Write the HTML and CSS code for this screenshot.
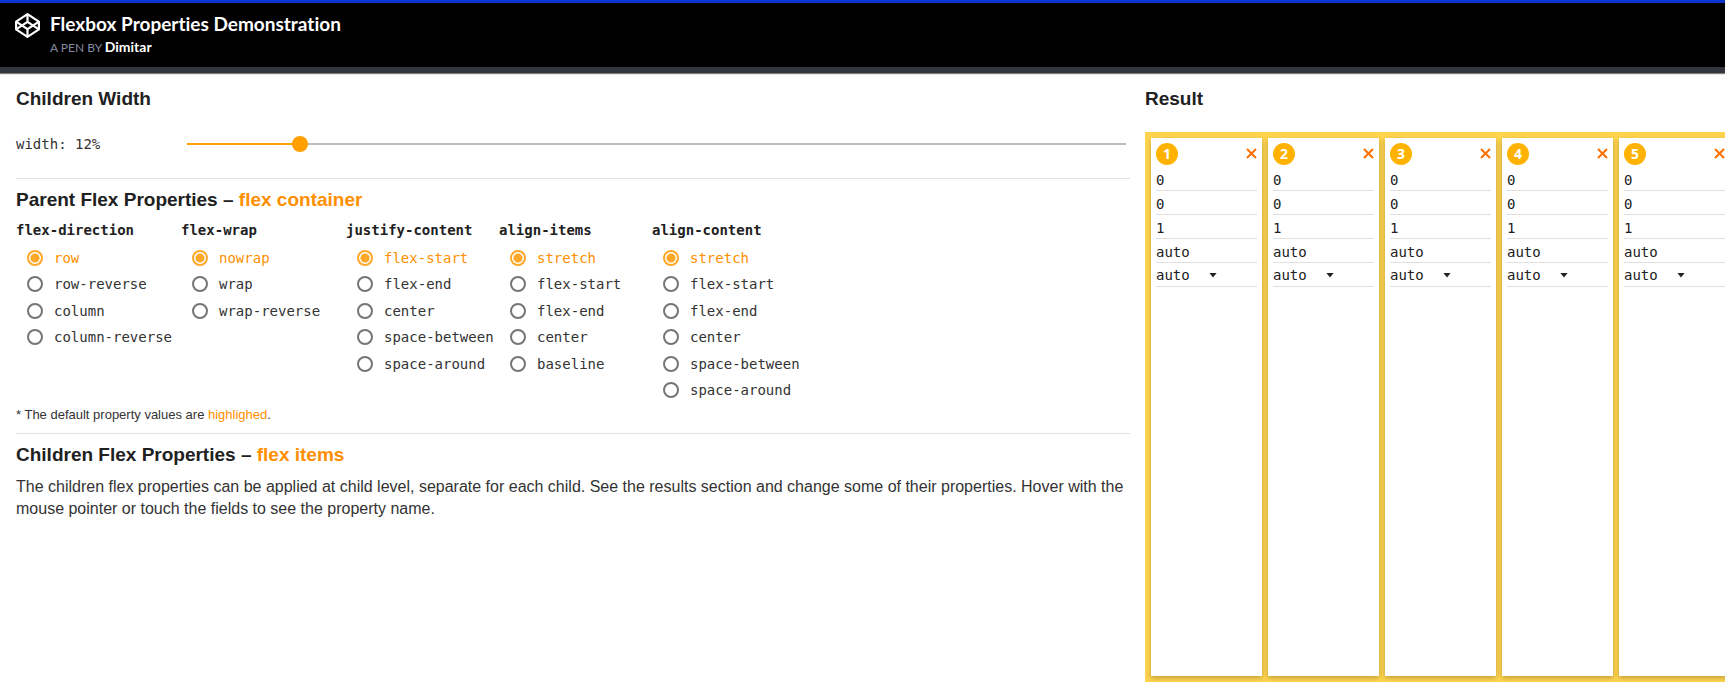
FILE: index.html
```html
<!DOCTYPE html>
<html lang="en">
<head>
<meta charset="utf-8">
<title>Flexbox Properties Demonstration</title>
<link rel="stylesheet" href="styles.css">
</head>
<body>
<header class="topbar">
  <svg class="logo" viewBox="0 0 25 25" fill="none" stroke="#fff" stroke-width="2.200" stroke-linejoin="round" aria-hidden="true">
    <path d="M12.500 1.200 23.900 8.600V16.400L12.500 23.800 1.100 16.400V8.600Z"/>
    <path d="M1.100 8.600 12.500 16.200 23.900 8.600M1.100 16.400 12.500 8.800 23.900 16.400M12.500 1.200V8.800M12.500 16.200V23.800"/>
  </svg>
  <div>
    <h1 class="pen-title">Flexbox Properties Demonstration</h1>
    <p class="pen-by">A PEN BY <a class="author" href="#">Dimitar</a></p>
  </div>
</header>
<main class="page">
  <div class="controls">
    <section class="section width-section">
      <h2 class="heading">Children Width</h2>
      <div class="width-row">
        <label class="width-label" for="width">width: 12%</label>
        <input class="slider" id="width" type="range" min="0" max="100" value="12">
      </div>
    </section>
    <section class="section">
      <h2 class="heading">Parent Flex Properties – <span class="accent">flex container</span></h2>
      <div class="groups">
        <fieldset class="group">
          <legend class="legend">flex-direction</legend>
          <label class="option"><input class="radio" type="radio" name="direction" checked><span>row</span></label>
          <label class="option"><input class="radio" type="radio" name="direction"><span>row-reverse</span></label>
          <label class="option"><input class="radio" type="radio" name="direction"><span>column</span></label>
          <label class="option"><input class="radio" type="radio" name="direction"><span>column-reverse</span></label>
        </fieldset>
        <fieldset class="group">
          <legend class="legend">flex-wrap</legend>
          <label class="option"><input class="radio" type="radio" name="wrap" checked><span>nowrap</span></label>
          <label class="option"><input class="radio" type="radio" name="wrap"><span>wrap</span></label>
          <label class="option"><input class="radio" type="radio" name="wrap"><span>wrap-reverse</span></label>
        </fieldset>
        <fieldset class="group">
          <legend class="legend">justify-content</legend>
          <label class="option"><input class="radio" type="radio" name="justify" checked><span>flex-start</span></label>
          <label class="option"><input class="radio" type="radio" name="justify"><span>flex-end</span></label>
          <label class="option"><input class="radio" type="radio" name="justify"><span>center</span></label>
          <label class="option"><input class="radio" type="radio" name="justify"><span>space-between</span></label>
          <label class="option"><input class="radio" type="radio" name="justify"><span>space-around</span></label>
        </fieldset>
        <fieldset class="group">
          <legend class="legend">align-items</legend>
          <label class="option"><input class="radio" type="radio" name="items" checked><span>stretch</span></label>
          <label class="option"><input class="radio" type="radio" name="items"><span>flex-start</span></label>
          <label class="option"><input class="radio" type="radio" name="items"><span>flex-end</span></label>
          <label class="option"><input class="radio" type="radio" name="items"><span>center</span></label>
          <label class="option"><input class="radio" type="radio" name="items"><span>baseline</span></label>
        </fieldset>
        <fieldset class="group">
          <legend class="legend">align-content</legend>
          <label class="option"><input class="radio" type="radio" name="content" checked><span>stretch</span></label>
          <label class="option"><input class="radio" type="radio" name="content"><span>flex-start</span></label>
          <label class="option"><input class="radio" type="radio" name="content"><span>flex-end</span></label>
          <label class="option"><input class="radio" type="radio" name="content"><span>center</span></label>
          <label class="option"><input class="radio" type="radio" name="content"><span>space-between</span></label>
          <label class="option"><input class="radio" type="radio" name="content"><span>space-around</span></label>
        </fieldset>
      </div>
      <p class="note">* The default property values are <span class="accent">highlighed</span>.</p>
    </section>
    <section class="section">
      <h2 class="heading">Children Flex Properties – <span class="accent">flex items</span></h2>
      <p class="text">The children flex properties can be applied at child level, separate for each child. See the results section and change some of their properties. Hover with the mouse pointer or touch the fields to see the property name.</p>
    </section>
  </div>
  <section class="result">
    <h2 class="heading">Result</h2>
    <div class="stage">
      <article class="card">
        <div class="card-top"><span class="badge">1</span><button class="close" type="button" aria-label="Remove 1"><svg viewBox="0 0 11 11"><path d="M1 1 10 10M10 1 1 10"/></svg></button></div>
        <input class="field" aria-label="order" value="0"><input class="field" aria-label="flex-grow" value="0"><input class="field" aria-label="flex-shrink" value="1"><input class="field" aria-label="flex-basis" value="auto">
        <div class="select-wrap"><select class="select" aria-label="align-self"><option>auto</option></select></div>
      </article>
      <article class="card">
        <div class="card-top"><span class="badge">2</span><button class="close" type="button" aria-label="Remove 2"><svg viewBox="0 0 11 11"><path d="M1 1 10 10M10 1 1 10"/></svg></button></div>
        <input class="field" aria-label="order" value="0"><input class="field" aria-label="flex-grow" value="0"><input class="field" aria-label="flex-shrink" value="1"><input class="field" aria-label="flex-basis" value="auto">
        <div class="select-wrap"><select class="select" aria-label="align-self"><option>auto</option></select></div>
      </article>
      <article class="card">
        <div class="card-top"><span class="badge">3</span><button class="close" type="button" aria-label="Remove 3"><svg viewBox="0 0 11 11"><path d="M1 1 10 10M10 1 1 10"/></svg></button></div>
        <input class="field" aria-label="order" value="0"><input class="field" aria-label="flex-grow" value="0"><input class="field" aria-label="flex-shrink" value="1"><input class="field" aria-label="flex-basis" value="auto">
        <div class="select-wrap"><select class="select" aria-label="align-self"><option>auto</option></select></div>
      </article>
      <article class="card">
        <div class="card-top"><span class="badge">4</span><button class="close" type="button" aria-label="Remove 4"><svg viewBox="0 0 11 11"><path d="M1 1 10 10M10 1 1 10"/></svg></button></div>
        <input class="field" aria-label="order" value="0"><input class="field" aria-label="flex-grow" value="0"><input class="field" aria-label="flex-shrink" value="1"><input class="field" aria-label="flex-basis" value="auto">
        <div class="select-wrap"><select class="select" aria-label="align-self"><option>auto</option></select></div>
      </article>
      <article class="card">
        <div class="card-top"><span class="badge">5</span><button class="close" type="button" aria-label="Remove 5"><svg viewBox="0 0 11 11"><path d="M1 1 10 10M10 1 1 10"/></svg></button></div>
        <input class="field" aria-label="order" value="0"><input class="field" aria-label="flex-grow" value="0"><input class="field" aria-label="flex-shrink" value="1"><input class="field" aria-label="flex-basis" value="auto">
        <div class="select-wrap"><select class="select" aria-label="align-self"><option>auto</option></select></div>
      </article>
    </div>
  </section>
</main>
</body>
</html>
```
FILE: styles.css
```css
* { box-sizing: border-box; }

body {
  --mono: "DejaVu Sans Mono", monospace;
  margin: 0;
  background: #fff;
  color: #212121;
  font: 16px/22px "Liberation Sans", Arial, sans-serif;
}

h1, h2, p { margin: 0; }

.topbar {
  display: flex;
  gap: 10px;
  padding: 10px 15px 7px;
  border-top: 3px solid #0b35d0;
  border-bottom: 6px solid #34363e;
  background: #000;
  box-shadow: 0 1px 1px rgba(0, 0, 0, .5);
}

.logo { width: 25px; height: 25px; }

.pen-title {
  color: #fff;
  font: 700 19px/22px Lato, sans-serif;
  font-variant-ligatures: none;
}

.pen-by {
  color: #868ca0;
  font: 12px/24px Lato, sans-serif;
}

.author {
  color: #fff;
  font-size: 14px;
  font-weight: 700;
  text-decoration: none;
}

.page {
  display: grid;
  grid-template-columns: 1114fr 580fr;
  gap: 15px;
  padding-left: 16px;
}

.controls, .result { min-width: 0; }

.section { padding: 12px 0 4px; }
.section + .section {
  padding: 7px 0 6px;
  border-top: 1px solid #e0e0e0;
}

.heading { font-size: 19px; line-height: 28px; }
.accent { color: #ff8f00; }

.width-row {
  display: flex;
  align-items: center;
  height: 61px;
  padding-right: 4px;
}

.width-label {
  width: 171px;
  color: #333;
  font: 14px/22px var(--mono);
}

.slider {
  flex: 1;
  height: 16px;
  margin: 0 -8px;
  appearance: none;
  background: none;
}

.slider::-webkit-slider-runnable-track {
  height: 2px;
  background: linear-gradient(to right, transparent 8px, #ffa000 8px, #ffa000 12%, #bdbdbd 12%, #bdbdbd calc(100% - 8px), transparent calc(100% - 8px));
}

.slider::-webkit-slider-thumb {
  appearance: none;
  width: 16px;
  height: 16px;
  margin-top: -7px;
  border-radius: 50%;
  background: #ffa000;
}

.groups {
  display: grid;
  grid-template-columns: 165px 165px 153px 153px 1fr;
  padding-top: 3px;
}

.group {
  min-width: 0;
  margin: 0;
  padding: 0;
  border: 0;
}

.legend {
  padding: 0;
  font: bold 14px/27px var(--mono);
}

.option {
  display: flex;
  align-items: center;
  gap: 11px;
  height: 26px;
  padding-left: 11px;
  color: #333;
  font: 14px/26px var(--mono);
}

.option:nth-of-type(odd) { height: 27px; }

.radio {
  width: 16px;
  height: 16px;
  margin: 0;
  appearance: none;
  border: 2px solid #757575;
  border-radius: 50%;
}

.radio:checked {
  border-color: #ffa726;
  background: radial-gradient(circle, #ffa726 4px, #fff 5px);
}

.radio:checked + span { color: #ff8f00; }

.note { color: #333; font-size: 13px; line-height: 24px; }
.text { padding-top: 7px; color: #333; }

.result { padding-top: 12px; overflow: hidden; }

.stage {
  display: flex;
  gap: 6px;
  min-height: calc(100vh - 135px);
  margin-top: 19px;
  padding: 6px;
  background: #ffd54f;
}

.card {
  display: flex;
  flex: 0 0 111px;
  flex-direction: column;
  padding: 5px;
  background: #fff;
  box-shadow: 0 2px 5px rgba(0, 0, 0, .26);
}

.card-top {
  display: flex;
  justify-content: space-between;
  align-items: flex-start;
  height: 24px;
}

.badge {
  width: 22px;
  height: 22px;
  border-radius: 50%;
  background: #ffb300;
  color: #fff;
  font: bold 14px/22px "Open Sans", sans-serif;
  text-align: center;
}

.close {
  display: flex;
  padding: 5px 0;
  border: 0;
  background: none;
}

.close svg {
  width: 11px;
  height: 11px;
  stroke: #ff6f00;
  stroke-width: 2;
}

.field, .select-wrap {
  width: 100%;
  height: 24px;
  padding: 3px 0 0;
  border: 0;
  border-bottom: 1px solid #e0e0e0;
  background: none;
  color: #212121;
  font: 14px/20px var(--mono);
}

.select-wrap {
  display: grid;
  align-items: center;
  padding-top: 1px;
}

.select {
  grid-area: 1 / 1;
  appearance: none;
  padding: 0;
  border: 0;
  background: none;
  color: inherit;
  font: inherit;
}

.select-wrap::after {
  grid-area: 1 / 1;
  width: 8px;
  height: 5px;
  margin-left: 53px;
  background: #212121;
  clip-path: polygon(0 0, 100% 0, 50% 100%);
  content: "";
  pointer-events: none;
}
```
